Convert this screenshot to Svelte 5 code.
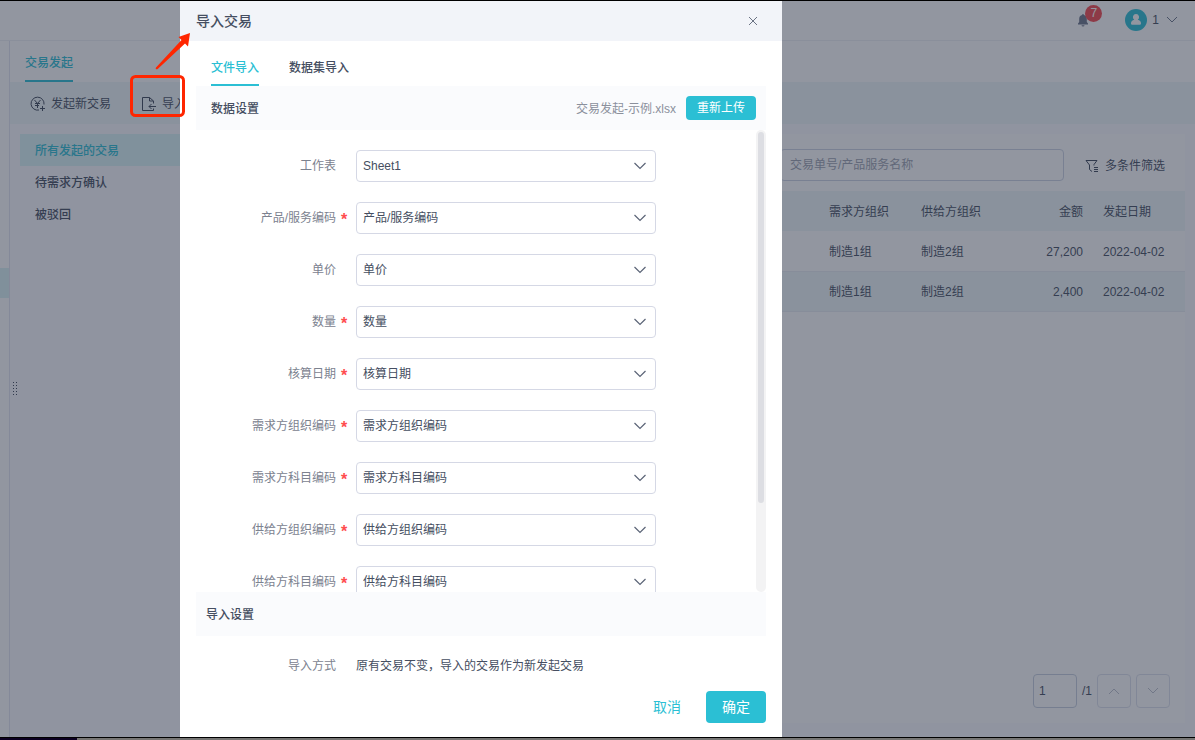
<script>
  const menu = ['所有发起的交易', '待需求方确认', '被驳回'];

  const rows = [
    { demand: '制造1组', supply: '制造2组', amount: '27,200', date: '2022-04-02' },
    { demand: '制造1组', supply: '制造2组', amount: '2,400', date: '2022-04-02' }
  ];

  const fields = [
    { id: 'sheet', label: '工作表', value: 'Sheet1', required: false },
    { id: 'product', label: '产品/服务编码', value: '产品/服务编码', required: true },
    { id: 'price', label: '单价', value: '单价', required: false },
    { id: 'count', label: '数量', value: '数量', required: true },
    { id: 'date', label: '核算日期', value: '核算日期', required: true },
    { id: 'demand-org', label: '需求方组织编码', value: '需求方组织编码', required: true },
    { id: 'demand-subject', label: '需求方科目编码', value: '需求方科目编码', required: true },
    { id: 'supply-org', label: '供给方组织编码', value: '供给方组织编码', required: true },
    { id: 'supply-subject', label: '供给方科目编码', value: '供给方科目编码', required: true }
  ];

  let page = $state('1');
  let keyword = $state('');
  let current = $state(0);
</script>

<div class="screen">
  <div class="app">
    <header class="topbar">
      <button class="bell" aria-label="7">
        <svg width="12" height="14" viewBox="0 0 12 14">
          <path d="M6 1c.6 0 .9.4.9.9 1.900.4 2.900 1.900 2.900 3.900v3.100l1.200 1.700v.9H1v-.9l1.200-1.700V5.800C2.200 3.800 3.200 2.300 5.100 1.900 5.100 1.400 5.400 1 6 1z" fill="#6b7489" />
          <path d="M4.500 12.300h3a1.500 1.200 0 0 1-3 0z" fill="#6b7489" />
        </svg>
        <span class="badge">7</span>
      </button>
      <button class="user">
        <svg width="22" height="22" viewBox="0 0 22 22">
          <circle cx="11" cy="11" r="11" fill="#2bbfd4" />
          <path d="M11 5a3.100 3.100 0 0 1 1.700 5.700c2 .5 3.300 1.800 3.300 3.600 0 1-.6 1.500-1.600 1.500H7.600c-1 0-1.600-.5-1.600-1.500 0-1.800 1.300-3.100 3.300-3.600A3.100 3.100 0 0 1 11 5z" fill="#fff" />
        </svg>
        <span>1</span>
        <svg width="12" height="8" viewBox="0 0 12 8"><path d="M1 1l5 5 5-5" fill="none" stroke="#6b7489" /></svg>
      </button>
    </header>

    <div class="main">
      <aside class="rail"><div class="rail-active"></div></aside>
      <div class="content">
        <nav class="page-tabs"><a href="#start">交易发起</a></nav>
        <div class="toolbar">
          <button>
            <svg width="16" height="16" viewBox="0 0 16 16" fill="none" stroke="#3d4659">
              <path d="M14 8.500A6.500 6.500 0 1 0 9 14" />
              <path d="M4.500 4l3 3.500 3-3.500M7.500 7.500V12M5 7.500h5M5 9.500h4M12.500 10v5M10 12.500h5" />
            </svg>
            发起新交易
          </button>
          <button>
            <svg width="16" height="16" viewBox="0 0 16 16" fill="none" stroke="#3d4659">
              <path d="M12.500 7.500V5L8.500 1.500h-7v13h11v-2M8.500 1.500V5h4M15 10.500H8M10.500 8L8 10.500 10.500 13" />
            </svg>
            导入
          </button>
        </div>

        <div class="body">
          <ul class="menu">
            {#each menu as item, i}
              <li><button class:active={current === i} onclick={() => (current = i)}>{item}</button></li>
            {/each}
          </ul>
          <section class="card">
            <div class="filters">
              <input class="search" bind:value={keyword} placeholder="交易单号/产品服务名称" aria-label="交易单号/产品服务名称" />
              <button class="filter">
                <svg width="14" height="14" viewBox="0 0 14 14" fill="none" stroke="#3d4659">
                  <path d="M7 12.500L4.500 10.500V6L1 1.500h11L9 5.500v1M9 8.500h4M9 10.500h4M9 12.500h4" />
                </svg>
                多条件筛选
              </button>
            </div>
            <table>
              <thead>
                <tr>
                  <th class="rest"></th>
                  <th>需求方组织</th>
                  <th>供给方组织</th>
                  <th class="num">金额</th>
                  <th>发起日期</th>
                </tr>
              </thead>
              <tbody>
                {#each rows as row}
                  <tr>
                    <td></td>
                    <td>{row.demand}</td>
                    <td>{row.supply}</td>
                    <td class="num">{row.amount}</td>
                    <td>{row.date}</td>
                  </tr>
                {/each}
              </tbody>
            </table>
            <div class="pager">
              <input bind:value={page} aria-label="/1" />
              <span>/1</span>
              <button aria-label="‹" disabled>
                <svg width="12" height="8" viewBox="0 0 12 8"><path d="M1 7l5-5 5 5" fill="none" stroke="#bcc1cc" /></svg>
              </button>
              <button aria-label="›" disabled>
                <svg width="12" height="8" viewBox="0 0 12 8"><path d="M1 1l5 5 5-5" fill="none" stroke="#bcc1cc" /></svg>
              </button>
            </div>
          </section>
        </div>
      </div>
    </div>

    <div class="grip">
      {#each Array(10) as _}<i></i>{/each}
    </div>
    <div class="mask"></div>

    <div class="modal" role="dialog" aria-labelledby="modal-title">
      <div class="modal-head">
        <h2 id="modal-title">导入交易</h2>
        <button aria-label="×">
          <svg width="10" height="10" viewBox="0 0 10 10"><path d="M1 1l8 8M9 1L1 9" stroke="#6b7384" /></svg>
        </button>
      </div>
      <div class="modal-body">
        <div class="tabs">
          <button class="on">文件导入</button>
          <button>数据集导入</button>
        </div>
        <div class="bar">
          <h3>数据设置</h3>
          <span class="file">交易发起-示例.xlsx</span>
          <button class="upload">重新上传</button>
        </div>
        <div class="scroll">
          <form class="fields">
            {#each fields as f}
              <div class="field">
                <label for={f.id}>{f.label}</label>
                <span class="star">{f.required ? '*' : ''}</span>
                <div class="select">
                  <select id={f.id}><option>{f.value}</option></select>
                  <svg width="12" height="8" viewBox="0 0 12 8"><path d="M0.500 1L6 6.500 11.500 1" fill="none" stroke="#5b6477" stroke-width="1.200" /></svg>
                </div>
              </div>
            {/each}
          </form>
          <div class="track"><div class="thumb"></div></div>
        </div>
        <div class="bar import"><h3>导入设置</h3></div>
        <div class="field mode">
          <span class="label">导入方式</span>
          <span class="star"></span>
          <span>原有交易不变，导入的交易作为新发起交易</span>
        </div>
        <div class="actions">
          <button class="cancel">取消</button>
          <button class="ok">确定</button>
        </div>
      </div>
    </div>
  </div>

  <div class="dock"><div class="dock-dark"></div></div>

  <svg class="mark" width="70" height="90" viewBox="0 0 70 90">
    <rect x="6.500" y="47.500" width="52" height="39" rx="4" fill="none" stroke="#ff2600" stroke-width="3" />
    <path d="M65 4L53.500 8l3 3L31 38.500c-1 1.200.5 2.500 1.700 1.500L60 14.500l3 3z" fill="#ff2600" />
  </svg>
</div>

<style>
  :global(body) { margin: 0; }
  * { box-sizing: border-box; }
  .screen { position: relative; display: flex; flex-direction: column; height: 100vh; border-top: 1px solid #000; overflow: hidden; color: #454e61; font: 12px/16px "Liberation Sans", "Noto Sans CJK SC", sans-serif; }
  button { display: flex; align-items: center; border: 0; padding: 0; background: none; color: inherit; font: inherit; cursor: pointer; }
  input, select { font: inherit; color: inherit; outline: none; }
  h2, h3, ul { margin: 0; padding: 0; font-weight: 500; }
  svg { flex: none; }

  .app { position: relative; flex: 1; min-height: 0; display: flex; flex-direction: column; background: #fafbfe; }
  .topbar { display: flex; justify-content: flex-end; align-items: center; gap: 36px; height: 40px; padding: 0 17px 2px 0; background: #fff; border-bottom: 1px solid #eef0f5; }
  .bell { position: relative; }
  .badge { position: absolute; left: 8px; top: -8px; width: 17px; height: 17px; border-radius: 50%; background: #f5474d; color: #fff; line-height: 17px; text-align: center; }
  .user { gap: 5px; }
  .user svg:last-child { margin-left: 2px; }

  .main { flex: 1; min-height: 0; display: flex; }
  .rail { width: 10px; background: #fff; border-right: 1px solid #e2e4f0; padding-top: 227px; }
  .rail-active { height: 30px; background: #dbf2f5; }
  .content { flex: 1; min-width: 0; display: flex; flex-direction: column; }
  .page-tabs { display: flex; height: 41px; padding-left: 15px; background: #fff; }
  .page-tabs a { height: 41px; line-height: 44px; border-bottom: 2px solid #2bbfd4; color: #2bbfd4; font-weight: 500; text-decoration: none; }
  .toolbar { display: flex; gap: 30px; height: 42px; padding: 2px 0 0 20px; background: #eff7f8; }
  .toolbar button { gap: 5px; }
  .body { flex: 1; min-height: 0; display: flex; padding: 10px 10px 14px; }
  .menu { width: 180px; list-style: none; }
  .menu button { width: 100%; height: 32px; padding: 2px 0 0 15px; }
  .menu .active { background: #dbf4f7; color: #2bbfd4; }
  .card { flex: 1; min-width: 0; display: flex; flex-direction: column; background: #fff; }
  .filters { display: flex; justify-content: flex-end; gap: 21px; padding: 15px 20px 10px; }
  .search { width: 284px; height: 32px; padding: 0 9px; border: 1px solid #ccd3e2; border-radius: 4px; background: #fff; }
  .search::placeholder { color: #9da3b0; }
  .filter { gap: 6px; padding-top: 2px; }
  table { width: 100%; border-collapse: collapse; table-layout: fixed; }
  th, td { width: 92px; height: 40px; padding: 2px 10px 0; text-align: left; font-weight: 400; white-space: nowrap; }
  .rest { width: auto; }
  .num { width: 90px; text-align: right; }
  thead tr, tbody tr:nth-child(2) { background: #eff7f8; }
  tbody tr { border-bottom: 1px solid #e9edf3; }
  .pager { display: flex; align-items: center; gap: 5px; margin-top: auto; padding: 0 15px 15px; justify-content: flex-end; }
  .pager input { width: 44px; height: 34px; padding: 0 5px; border: 1px solid #c6cede; border-radius: 4px; background: #fff; }
  .pager button { justify-content: center; width: 34px; height: 34px; border: 1px solid #dde1ec; border-radius: 4px; }

  .grip { position: absolute; left: 13px; top: 381px; display: grid; grid-template-columns: 1px 1px; gap: 2px; }
  .grip i { width: 1px; height: 1px; background: #3d4659; }
  .mask { position: absolute; inset: 0; background: rgba(37, 45, 65, 0.5); }

  .modal { position: absolute; left: 180px; top: 0; bottom: 0; width: 602px; display: flex; flex-direction: column; background: #fff; }
  .modal-head { display: flex; justify-content: space-between; align-items: center; height: 40px; padding: 0 24px 0 16px; background: #f2f4f9; }
  .modal-head h2 { font-size: 14px; line-height: 20px; }
  .modal-body { flex: 1; min-height: 0; display: flex; flex-direction: column; padding: 0 16px 14px; }
  .tabs { display: flex; gap: 30px; height: 45px; padding: 0 15px; }
  .tabs button { padding-top: 10px; border-bottom: 2px solid transparent; font-weight: 500; }
  .tabs .on { border-color: #2bbfd4; color: #2bbfd4; }
  .bar { display: flex; align-items: center; flex: none; height: 44px; padding: 0 10px 0 15px; background: #fafbfd; }
  .bar h3, .file { padding-top: 2px; font-size: 12px; }
  .file { margin-left: auto; color: #8b909c; }
  .upload { justify-content: center; width: 70px; height: 24px; margin-left: 10px; border-radius: 4px; background: #2bbfd4; color: #fff; }
  .scroll { flex: 1; min-height: 0; display: flex; }
  .fields { flex: 1; display: flex; flex-direction: column; gap: 20px; padding-top: 20px; overflow: auto; scrollbar-width: none; }
  .field { display: flex; align-items: center; }
  .field label, .label { width: 140px; text-align: right; color: #7c828f; }
  .star { width: 20px; padding: 4px 0 0 5px; color: #ff4d4f; font-size: 16px; font-weight: 700; }
  .select { display: grid; align-items: center; width: 300px; }
  .select select, .select svg { grid-area: 1 / 1; }
  .select select { appearance: none; width: 100%; height: 32px; padding: 0 6px; border: 1px solid #d5d8e5; border-radius: 4px; background: #fff; }
  .select svg { justify-self: end; margin-right: 10px; pointer-events: none; }
  .track { width: 10px; padding: 2px; border-radius: 5px; background: #f3f3f4; }
  .thumb { height: 81%; border-radius: 3px; background: #dddee3; }
  .bar.import { padding-left: 10px; }
  .mode { height: 55px; padding-top: 4px; }
  .actions { display: flex; justify-content: flex-end; gap: 25px; font-size: 14px; }
  .actions button { height: 32px; }
  .cancel { color: #2bbfd4; }
  .ok { justify-content: center; width: 60px; border-radius: 4px; background: #2bbfd4; color: #fff; }

  .dock { height: 3px; border-top: 1px solid #000; background: #777674; }
  .dock-dark { width: 77px; height: 2px; background: #0c0022; }
  .mark { position: absolute; left: 125px; top: 28px; }
</style>
